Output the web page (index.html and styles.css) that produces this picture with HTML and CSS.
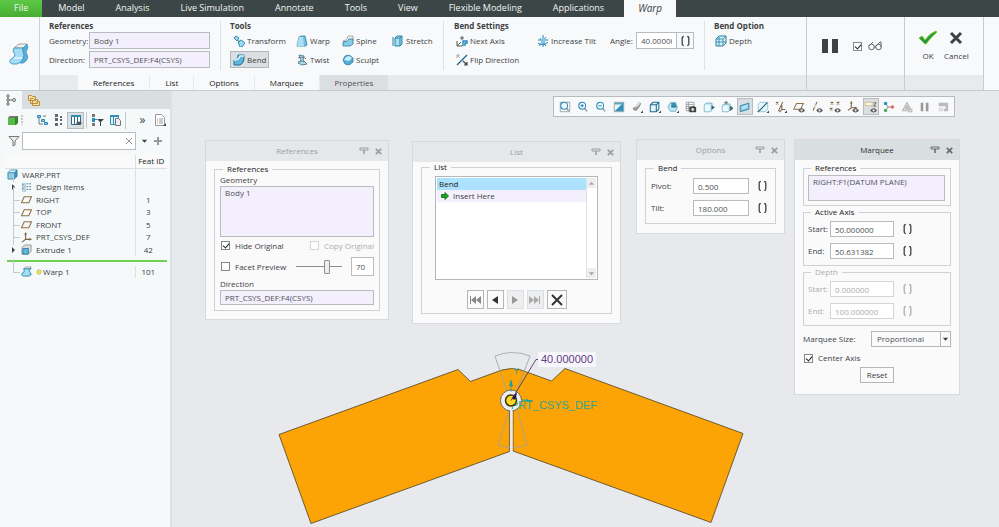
FILE: index.html
```html
<!DOCTYPE html>
<html lang="en">
<head>
  <meta charset="UTF-8" />
  <title>WARP.PRT</title>
  <link rel="stylesheet" href="styles.css">
</head>
<body>
  <svg class="sprite" aria-hidden="true">
    <symbol id="pin" viewBox="0 0 10 8"><path d="M1 1h8v2H1z" fill="none" stroke="currentColor"/><path d="M5 3v4" stroke="currentColor" stroke-width="1.6"/></symbol>
    <symbol id="close" viewBox="0 0 10 10"><path d="M2 2l6 6M8 2l-6 6" stroke="currentColor" stroke-width="2"/></symbol>
    <symbol id="cube" viewBox="0 0 12 12"><path d="M1 4l3-3h7l-3 3z" fill="#d5f1fb"/><path d="M1 4h7v7H1z" fill="#8ccbe8"/><path d="M8 4l3-3v7l-3 3z" fill="#3d93b8"/><path d="M1 4l3-3h7v7l-3 3H1zM1 4h7v7M8 4l3-3" fill="none" stroke="#2580a5" stroke-width=".8"/></symbol>
    <symbol id="scroll" viewBox="0 0 20 22"><path d="M5 5l5-4h8l-4 4z" fill="#f2f2f0" stroke="#888" stroke-width=".8"/><path d="M5 5h9q-1 3 1 5 1 3-1 6-2 4-6 5H3q-4-2-1-5l3-2q2-2 0-4-2-3 0-5z" fill="#a4ddf5" stroke="#2e8db8" stroke-width=".8"/><path d="M14 5l4-4q2 3 0 6-2 2 0 4 2 4-1 7-2 3-6 2 4-3 4-8-2-4-1-7z" fill="#58aed5" stroke="#2e8db8" stroke-width=".6"/><path d="M5 15h8" stroke="#e5f8ff" stroke-width="1.5"/></symbol>
    <symbol id="plane" viewBox="0 0 12 10"><path d="M3.500 2h8l-3 6.500h-8z" fill="none" stroke="#917044" stroke-width="1.200"/></symbol>
    <symbol id="eye" viewBox="0 0 8 6"><path d="M0 3q4-5 8 0-4 5-8 0z" fill="#555"/><circle cx="4" cy="3" r="1.300" fill="#eee"/></symbol>
    <symbol id="lens" viewBox="0 0 14 14"><path d="M8 8l4 4" stroke="#a9adb0" stroke-width="2"/><circle cx="6" cy="5.500" r="4" fill="#f5fcff" stroke="#2b90bf" stroke-width="1.200"/></symbol>
    <symbol id="csys" viewBox="0 0 12 12"><path d="M5 1v7h6M5 8l-4 3" fill="none" stroke="#7e6440" stroke-width="1.200"/><path d="M3.500 3L5 0l1.500 3zM9 6.500L12 8 9 9.500z" fill="#7e6440"/></symbol>
    <symbol id="brackets" viewBox="0 0 11 12"><path d="M3.800 1.500q-1.600 0-1.600 1.500v6q0 1.500 1.600 1.500M7.200 1.500q1.600 0 1.600 1.500v6q0 1.500-1.600 1.500" fill="none" stroke="currentColor" stroke-width="1.300"/></symbol>
    <symbol id="drop" viewBox="0 0 8 8"><path d="M1 2.500h6L4 6z" fill="currentColor"/></symbol>
  </svg>

  <header class="ribbon">
    <nav class="menu">
      <a href="#" class="file">File</a>
      <a href="#">Model</a>
      <a href="#">Analysis</a>
      <a href="#">Live Simulation</a>
      <a href="#">Annotate</a>
      <a href="#">Tools</a>
      <a href="#">View</a>
      <a href="#">Flexible Modeling</a>
      <a href="#">Applications</a>
      <a href="#" class="current">Warp</a>
    </nav>

    <div class="ribbon-body">
      <div class="feature-icon"><svg width="20" height="22"><use href="#scroll"/></svg></div>

      <div class="ribbon-main">
        <div class="groups">
          <section class="group refs">
            <h2>References</h2>
            <div class="line"><label for="geometry">Geometry:</label><input id="geometry" class="pick" value="Body 1"></div>
            <div class="line"><label for="direction">Direction:</label><input id="direction" class="pick" value="PRT_CSYS_DEF:F4(CSYS)"></div>
          </section>

          <section class="group tools">
            <h2>Tools</h2>
            <div class="tool-grid">
              <button class="tool"><svg viewBox="0 0 12 12"><path d="M1 3l2-2 3 2-2 3zM5 7l3-2 4 3-3 4H7z" fill="#9fd9ef" stroke="#2f8cb5"/><path d="M4 5l3 2" stroke="#777"/></svg>Transform</button>
              <button class="tool"><svg viewBox="0 0 12 12"><path d="M1 11L3 2l2-1h4l2 9-2 1z" fill="#76bedd" stroke="#2580a5" stroke-width=".8"/><path d="M3 2h4l1 9H1z" fill="#abdff1"/></svg>Warp</button>
              <button class="tool"><svg viewBox="0 0 12 12"><path d="M1 6q4 0 5-5h5v5L7 8z" fill="#eee" stroke="#999" stroke-width=".8"/><path d="M1 7q5 0 6-3h4v5l-3 2H1z" fill="#88cbe7" stroke="#2580a5" stroke-width=".8"/></svg>Spine</button>
              <button class="tool"><svg viewBox="0 0 12 12"><path d="M3 3l2-2h5v8l-2 2H3z" fill="#a9ddf0" stroke="#2580a5"/><path d="M3 3h5v8M8 3l2-2M1 2v9" fill="none" stroke="#2580a5"/></svg>Stretch</button>
              <button class="tool on"><svg viewBox="0 0 12 12"><path d="M1 6q4 0 4-5h6v4q0 4-4 6H1z" fill="#62b4d8" stroke="#1e7197"/><path d="M1 6q5 0 6-4h4" fill="none" stroke="#d8f4ff" stroke-width="1.500"/></svg>Bend</button>
              <button class="tool"><svg viewBox="0 0 12 12"><path d="M3 1l5 1-1 4 4 4-5 1-4-2 3-3z" fill="#aadcef" stroke="#54869b"/><path d="M2 4q6-2 8 1M2 8q6-2 8 1" fill="none" stroke="#777"/></svg>Twist</button>
              <button class="tool"><svg viewBox="0 0 12 12"><path d="M1 6l2-4 4-1 4 3v4l-4 3-4-1z" fill="#56acd3" stroke="#2580a5" stroke-width=".8"/><path d="M2 6l2-3 3-1 3 2-3 3z" fill="#c9eefa"/></svg>Sculpt</button>
            </div>
          </section>

          <section class="group settings">
            <h2>Bend Settings</h2>
            <div class="setting-grid">
              <button class="tool"><svg viewBox="0 0 12 12"><path d="M1 6v5h5M1 11l4-4M6 1v4M4 3h4" fill="none" stroke="#555"/><path d="M7 11V6h4v2H9v3" fill="none" stroke="#258abb" stroke-width="1.500"/></svg>Next Axis</button>
              <button class="tool"><svg viewBox="0 0 12 12"><path d="M6 0v12M1 5h10M2 11l7-9M3 3l6 8M1 8q5 4 10-1" fill="none" stroke="#2788ba"/><path d="M4 4h4v4H4z" fill="#82c5e5"/></svg>Increase Tilt</button>
              <div class="angle"><label for="angle">Angle:</label><input id="angle" value="40.000000"><button aria-label="Expression"><svg width="11" height="12"><use href="#brackets"/></svg></button></div>
              <button class="tool"><svg viewBox="0 0 12 12"><path d="M1 11L11 1" stroke="#246e98" stroke-width="1.500"/><path d="M1 4V1h3M1 1l3 3" fill="none" stroke="#aaa"/><path d="M7 7l4 4M11 8v3H8" fill="none" stroke="#444" stroke-width="1.200"/></svg>Flip Direction</button>
            </div>
          </section>

          <section class="group option">
            <h2>Bend Option</h2>
            <button class="tool"><svg viewBox="0 0 12 12"><path d="M1 4l3-3h7v7l-3 3H1z" fill="#d8f0f8" stroke="#2580a5"/><path d="M1 4h7v7M8 4l3-3M4 2v9M1 7h10" fill="none" stroke="#2580a5" stroke-width=".8"/></svg>Depth</button>
          </section>
        </div>

        <nav class="subtabs">
          <a href="#">References</a>
          <a href="#">List</a>
          <a href="#">Options</a>
          <a href="#">Marquee</a>
          <a href="#" class="off">Properties</a>
        </nav>
      </div>

      <div class="side preview">
        <div class="side-body">
          <button aria-label="Pause"><svg width="16" height="16"><path d="M0 1h6v14H0zM10 1h6v14h-6z" fill="#3d4244"/></svg></button>
          <input type="checkbox" id="preview" aria-label="Preview" checked>
          <label for="preview"><svg width="14" height="10" fill="none" stroke="#626669"><circle cx="3.500" cy="6" r="2.800"/><circle cx="10.500" cy="6" r="2.800"/><path d="M1 5l4-4M8 5l4-4h1v5M6 6h2"/></svg></label>
        </div>
      </div>
      <div class="side confirm">
        <div class="side-body">
          <button><svg width="20" height="16"><path d="M1 8l3-2 3 4q5-7 11-9l1 1Q13 7 8 14H7z" fill="#1c9b46" stroke="#8fc31f"/></svg>OK</button>
          <button><svg width="16" height="16"><path d="M3 3l10 10M13 3L3 13" stroke="#3d4244" stroke-width="3"/></svg>Cancel</button>
        </div>
      </div>
      <div class="rest"></div>
    </div>
  </header>

  <main class="work">
    <aside class="sidebar">
      <div class="side-tabs">
        <button class="current" aria-label="Model tree"><svg width="12" height="12" fill="none" stroke="#666"><path d="M3 1v10M3 6h4"/><circle cx="3" cy="2" r="1.200" fill="#fff"/><circle cx="3" cy="6" r="1.200" fill="#fff"/><circle cx="3" cy="10" r="1.200" fill="#fff"/><circle cx="9" cy="6" r="1.500"/></svg></button>
        <button aria-label="Folders"><svg width="13" height="12" fill="#f5e1b0" stroke="#bd8d39"><path d="M1.500 1.500h3l1 1h3v4h-7zM3.500 4.500h3l1 1h3v4h-7zM5.500 6.500h3l1 1h3v4h-7z"/></svg></button>
      </div>

      <div class="tree-tools">
        <svg width="12" height="12"><path d="M1 4l2-2h8v7l-2 2H1z" fill="#338928"/><path d="M1 4h7v7H1z" fill="#55bd45"/><path d="M1 4l2-2h8L8 4z" fill="#777"/></svg>
        <svg width="3" height="12"><path d="M1 1v10" stroke="#999" stroke-dasharray="2 1"/></svg>
        <button aria-label="Expand"><svg width="12" height="12" stroke="#2989b1" fill="#8fcdea"><path d="M1.500 1.500h3v2h-3zM5.500 5.500h3v2h-3zM8.500 8.500h3v2h-3z"/><path d="M3 4v6h4M7 2h3" fill="none" stroke="#777"/></svg></button>
        <button aria-label="Collapse"><svg width="8" height="12" fill="#666"><path d="M0 0h3v3H0zM0 4h3v3H0zM0 9h3v3H0zM5 2h2v2H5zM5 5h2v2H5zM5 9h2v2H5z"/></svg></button>
        <button class="on" aria-label="Columns"><svg width="12" height="12"><path d="M1.500 1.500h9v9h-9zM4.500 1v9M7.500 1v9" fill="#fff" stroke="#256c88"/><path d="M1 1h10v2H1z" fill="#338eb3"/><path d="M6 9q3-3 6 0-3 4-6 0" fill="#555"/></svg></button>
        <i class="bar"></i>
        <button aria-label="Tree filters"><svg width="12" height="12"><path d="M0 0h3v3H0zM0 9h3v3H0z" fill="#777"/><path d="M0 4h3v4H0zM3 5h2v1H3z" fill="#278cb8"/><path d="M5 5h7L9 8v4H8V8z" fill="#444"/></svg></button>
        <button aria-label="Tree columns"><svg width="12" height="12"><path d="M1.500 1.500h8v9h-8zM4.500 1v9" fill="#d8f0fa" stroke="#398faf"/><path d="M1 1h9v2H1z" fill="#338eb3"/><path d="M6.500 4.500h3l2 2v5h-5z" fill="#eee" stroke="#777"/></svg></button>
        <i class="bar"></i>
        <button class="more">»</button>
        <button aria-label="Show"><svg width="12" height="12"><path d="M1.500.500h6l3 3v8h-9z" fill="#fff" stroke="#999"/><path d="M3 5h1M5 5h4M3 7h1M5 7h4M3 9h1M5 9h4" stroke="#999"/><path d="M12 9v3H9z" fill="#444"/></svg></button>
      </div>

      <div class="filter">
        <svg width="12" height="12"><path d="M1 1.500h10L7 6v4l-2 1V6z" fill="#eee" stroke="#777"/></svg>
        <div class="search"><input aria-label="Filter tree"><button aria-label="Clear"><svg width="8" height="8"><path d="M1 1l6 6M7 1L1 7" stroke="#999"/></svg></button></div>
        <button aria-label="Filter list"><svg width="7" height="8"><use href="#drop"/></svg></button>
        <button aria-label="Add"><svg width="8" height="8"><path d="M4 0v8M0 4h8" stroke="#999" stroke-width="2"/></svg></button>
      </div>

      <table class="tree">
        <thead><tr><th></th><th>Feat ID</th></tr></thead>
        <tbody>
          <tr><td><span class="node root"><svg viewBox="0 0 12 12"><use href="#cube"/></svg>WARP.PRT</span></td><td></td></tr>
          <tr><td><span class="node exp"><svg viewBox="0 0 12 12"><path d="M1 1h3v10H1z" fill="#b8ddea"/><path d="M2 2v2M2 6v2M6 2h2M6 5h2M6 8h2M9 2h2M9 5h2M9 8h2" stroke="#397d9b"/><path d="M4.500 1v10" stroke="#aaa"/></svg>Design Items</span></td><td></td></tr>
          <tr><td><span class="node"><svg viewBox="0 0 12 10"><use href="#plane"/></svg>RIGHT</span></td><td>1</td></tr>
          <tr><td><span class="node"><svg viewBox="0 0 12 10"><use href="#plane"/></svg>TOP</span></td><td>3</td></tr>
          <tr><td><span class="node"><svg viewBox="0 0 12 10"><use href="#plane"/></svg>FRONT</span></td><td>5</td></tr>
          <tr><td><span class="node"><svg viewBox="0 0 12 12"><use href="#csys"/></svg>PRT_CSYS_DEF</span></td><td>7</td></tr>
          <tr><td><span class="node exp"><svg viewBox="0 0 12 12"><path d="M1 4l3-3h7v7l-3 3H1z" fill="#ddd" stroke="#999"/><path d="M2 5h6v6H2z" fill="#66b7da" stroke="#2580a5"/></svg>Extrude 1</span></td><td>42</td></tr>
          <tr class="insert"><td colspan="2"><div></div></td></tr>
          <tr><td><span class="node"><svg viewBox="0 0 12 12"><path d="M3 3l2-2h6L9.500 3z" fill="#f2f2f0" stroke="#888" stroke-width=".7"/><path d="M3 3h6q-1 2 1 4l1 2-2 2H2Q0 10 1 8l2-1q1-2 0-4z" fill="#a4ddf5" stroke="#2580a5" stroke-width=".9"/><path d="M9 3l2-2q1 2-1 4zM10 7l1.500 2L9 11z" fill="#3d93b8"/></svg><svg class="star" viewBox="0 0 6 6"><path d="M3 0v6M0 3h6M1 1l4 4M5 1L1 5" stroke="#8c8b27" stroke-width=".6"/><circle cx="3" cy="3" r="1.600" fill="#f2e318"/></svg>Warp 1</span></td><td>101</td></tr>
        </tbody>
      </table>
    </aside>

    <section class="canvas">
      <svg class="model" width="827" height="436" viewBox="172 91 827 436">
        <path d="M279 434.500L458 369.500L470.500 381.500L502 370Q512 367 521 370L551.500 381L565 368.500L743 433.500L711 522.500L513 451V410H509.500V451.500L311 523.500Z" fill="#fca306" stroke="#4d4220" stroke-width=".8"/>
        <path d="M495 356Q512 349 530 356L514 398L527 445Q512 450 498 445L511 404Z" fill="none" stroke="#a0a0a4" stroke-width=".8"/>
        <circle cx="511" cy="400.500" r="10.500" fill="#efeff1" stroke="#555" stroke-width=".8"/>
        <path d="M509.900 409h2.700v43h-2.700z" fill="#e9eaee"/>
        <path d="M511 392v-9M509.500 386l1.500-6 1.500 6z" fill="#139ca5" stroke="#139ca5" stroke-width=".6"/>
        <path d="M522 400l11 1" stroke="#139ca5"/><path d="M526 399l7 2-7 1z" fill="#139ca5"/>
        <text x="513" y="374" class="axis">Y</text>
        <text x="511" y="409" class="csys">PRT_CSYS_DEF</text>
        <circle cx="511" cy="400.500" r="5.500" fill="#ffd91e" stroke="#3d3719" stroke-width="1.500"/>
        <path d="M511 400.500L536 359.500H539" fill="none" stroke="#4c3a69" stroke-width=".9"/>
        <path d="M512 398l5-6-1 6-2 2z" fill="#211950"/>
        <path d="M538 352h58v15h-58z" fill="#f7f6fb"/>
        <text x="541" y="363" class="dim">40.000000</text>
      </svg>

      <div class="view-tools">
        <button aria-label="Refit"><svg viewBox="0 0 14 14"><path d="M1.500 1.500h11v11h-11z" fill="#fff" stroke="#999"/><use href="#lens"/></svg></button>
        <button aria-label="Zoom in"><svg viewBox="0 0 14 14"><use href="#lens"/><path d="M6 3.500v4M4 5.500h4" stroke="#246e98"/></svg></button>
        <button aria-label="Zoom out"><svg viewBox="0 0 14 14"><use href="#lens"/><path d="M4 5.500h4" stroke="#246e98"/></svg></button>
        <button aria-label="Repaint"><svg viewBox="0 0 14 14"><path d="M1.500 1.500h11v11h-11z" fill="#e7f4f8" stroke="#999"/><path d="M2 12L12 2v10z" fill="#2d91b9"/><path d="M2 2h10v2H2z" fill="#55a5c1"/></svg></button>
        <button aria-label="Rendering"><svg viewBox="0 0 14 14"><path d="M9 1l3 2-2 4-4 5-4-2 1-3 4-1z" fill="#999"/><path d="M9 1l2 2-4 4-4 1" fill="#ddd"/><path d="M14 11v3h-3z" fill="#444"/></svg></button>
        <button aria-label="Display style"><svg viewBox="0 0 14 14"><path d="M1.500 4.500l3-3h7v8l-3 3h-7zM1.500 4.500h7v8M8.500 4.500l3-3" fill="#e4f4fa" stroke="#1f6d8e" stroke-width="1.200"/><path d="M14 11v3h-3z" fill="#444"/></svg></button>
        <button aria-label="Saved views"><svg viewBox="0 0 14 14"><path d="M1 7l3-5h6l2 5-2 5H4z" fill="#bee8f5" stroke="#6cacc6"/><path d="M5 2h5l1 5H5z" fill="#358eb3"/><path d="M5 7h6" stroke="#205c75"/><path d="M14 11v3h-3z" fill="#444"/></svg></button>
        <button aria-label="View manager"><svg viewBox="0 0 14 14"><path d="M1.500 1.500h9v10h-9zM1 4h9M1 6.500h9M1 9h9M4 1v11" fill="#fff" stroke="#999"/><path d="M5 7h2l1-1h3l1 1h1v6H5z" fill="#444"/><circle cx="9" cy="10" r="1.700" fill="#ddd"/></svg></button>
        <button aria-label="Perspective"><svg viewBox="0 0 14 14"><path d="M1.500 4.500l2-2h7v8l-2 2h-7z" fill="#c4ebf7" stroke="#69a8be"/><path d="M2 5h6v7H2z" fill="#edfbff"/><path d="M10 5l4 2.500-4 2.500z" fill="#405c68"/></svg></button>
        <button aria-label="Explode"><svg viewBox="0 0 14 14"><path d="M1.500 5.500l2-2h7v7l-2 2h-7z" fill="#c4ebf7" stroke="#69a8be"/><path d="M2 6h6v6H2z" fill="#edfbff"/><path d="M6 0v4M4 2h4M11 6l3 2.500-3 2.500z" fill="#405c68" stroke="#405c68"/></svg></button>
        <button class="on" aria-label="Section"><svg viewBox="0 0 14 14"><path d="M1.500 5.500l10-3v7l-10 3z" fill="#83c7e2" stroke="#2580a5"/><path d="M3 7l7-3v4l-7 2z" fill="#b8e2f2"/></svg></button>
        <button aria-label="Clipping"><svg viewBox="0 0 14 14"><path d="M1.500 3.500l2-2h9v8l-3 3h-8z" fill="#e6f8fc" stroke="#88c5db"/><path d="M1 13L12 2" stroke="#33515f" stroke-width="1.300"/><path d="M14 11v3h-3z" fill="#444"/></svg></button>
        <button aria-label="Datum display"><svg viewBox="0 0 14 14"><path d="M1 1l3 3M4 1L1 4M9 1L4 12M8 5v5h4M8 10l-3 3" fill="none" stroke="#826643" stroke-width="1.200"/><path d="M14 11v3h-3z" fill="#444"/></svg></button>
        <button aria-label="Planes"><svg viewBox="0 0 14 14"><use href="#plane" x="0" y="1" width="13" height="10"/><use href="#eye" x="6" y="8" width="8" height="6"/></svg></button>
        <button aria-label="Axes"><svg viewBox="0 0 14 14"><path d="M7 1L2 12" stroke="#826643" stroke-width="1.200" stroke-dasharray="4 1 1 1"/><use href="#eye" x="6" y="8" width="8" height="6"/></svg></button>
        <button aria-label="Points"><svg viewBox="0 0 14 14"><path d="M2 1l3 3M5 1L2 4M9 1l3 3M12 1L9 4M1 8l3 3M4 8l-3 3" stroke="#826643" stroke-width="1.400"/><use href="#eye" x="6" y="8" width="8" height="6"/></svg></button>
        <button aria-label="Coordinate systems"><svg viewBox="0 0 14 14"><use href="#csys" width="12" height="12"/><use href="#eye" x="6" y="8" width="8" height="6"/></svg></button>
        <button class="on" aria-label="Annotations"><svg viewBox="0 0 14 14"><path d="M.500 1.500h8v4h-8z" fill="#fff8e0" stroke="#c8b990"/><path d="M10 2h3L10 6h3" fill="none" stroke="#555"/><use href="#eye" x="6" y="8" width="8" height="6"/></svg></button>
        <button aria-label="Spin center"><svg viewBox="0 0 14 14"><path d="M3 3l3 4-3 4M6 7h5" fill="none" stroke="#777"/><circle cx="3" cy="3" r="2" fill="#318fb8"/><circle cx="3" cy="11" r="2" fill="#4dac62"/><circle cx="11" cy="7" r="2" fill="#e26b61"/></svg></button>
        <button aria-label="Simulate"><svg viewBox="0 0 14 14" fill="#ddd" stroke="#aaa"><path d="M7 1.500l5.500 10h-11z"/><path d="M7 5l2 4H5z"/><circle cx="11" cy="11" r="2"/></svg></button>
        <button aria-label="Pause"><svg viewBox="0 0 14 14"><path d="M2 2h3v10H2zM8 2h3v10H8z" fill="#999"/></svg></button>
        <button aria-label="Results"><svg viewBox="0 0 14 14"><path d="M2 2h11v10H8V9h2V6H2z" fill="#bbb"/><path d="M2 8h5v4H2z" fill="#ddd"/></svg></button>
      </div>

      <div class="dialog dlg-references">
        <div class="title"><h3>References</h3><button aria-label="Pin"><svg width="10" height="8"><use href="#pin"/></svg></button><button aria-label="Close"><svg width="9" height="9"><use href="#close"/></svg></button></div>
        <fieldset>
          <legend>References</legend>
          <label for="ref-geometry">Geometry</label>
          <textarea id="ref-geometry" class="pick tall">Body 1</textarea>
          <div class="check-row">
            <label class="check"><input type="checkbox" checked>Hide Original</label>
            <label class="check disabled"><input type="checkbox" disabled>Copy Original</label>
          </div>
          <div class="check-row facet">
            <label class="check"><input type="checkbox">Facet Preview</label>
            <input type="range" aria-label="Facet quality" min="0" max="100" value="70">
            <input class="value" aria-label="Facet value" value="70">
          </div>
          <label for="ref-direction">Direction</label>
          <input id="ref-direction" class="pick" value="PRT_CSYS_DEF:F4(CSYS)">
        </fieldset>
      </div>

      <div class="dialog dlg-list">
        <div class="title"><h3>List</h3><button aria-label="Pin"><svg width="10" height="8"><use href="#pin"/></svg></button><button aria-label="Close"><svg width="9" height="9"><use href="#close"/></svg></button></div>
        <fieldset>
          <legend>List</legend>
          <div class="listbox">
            <ul>
              <li class="selected">Bend</li>
              <li><svg width="8" height="8"><path d="M.500 2.500H4V.500L7.500 4 4 7.500V5.500H.500z" fill="#17a817" stroke="#0b5a14" stroke-width=".8"/></svg>Insert Here</li>
            </ul>
            <div class="scroll">
              <button aria-label="Scroll up"><svg class="flip" width="7" height="7"><use href="#drop"/></svg></button>
              <button aria-label="Scroll down"><svg width="7" height="7"><use href="#drop"/></svg></button>
            </div>
          </div>
          <div class="steps">
            <button aria-label="First"><svg width="12" height="8" fill="#888"><path d="M1 0h1v8H1zM7 0v8L2 4zM12 0v8L7 4z"/></svg></button>
            <button aria-label="Previous"><svg width="8" height="8" fill="#333"><path d="M7 0v8L1 4z"/></svg></button>
            <button aria-label="Next" disabled><svg width="8" height="8" fill="#999"><path d="M1 0v8l6-4z"/></svg></button>
            <button aria-label="Last" disabled><svg width="12" height="8" fill="#aaa"><path d="M10 0h1v8h-1zM0 0v8l5-4zM5 0v8l5-4z"/></svg></button>
            <button class="delete" aria-label="Delete"><svg width="14" height="14"><path d="M2 2l10 10M12 2L2 12" stroke="#333" stroke-width="2"/></svg></button>
          </div>
        </fieldset>
      </div>

      <div class="dialog dlg-options">
        <div class="title"><h3>Options</h3><button aria-label="Pin"><svg width="10" height="8"><use href="#pin"/></svg></button><button aria-label="Close"><svg width="9" height="9"><use href="#close"/></svg></button></div>
        <fieldset>
          <legend>Bend</legend>
          <div class="field"><label for="pivot">Pivot:</label><input id="pivot" value="0.500"><button aria-label="Expression"><svg width="11" height="12"><use href="#brackets"/></svg></button></div>
          <div class="field"><label for="tilt">Tilt:</label><input id="tilt" value="180.000"><button aria-label="Expression"><svg width="11" height="12"><use href="#brackets"/></svg></button></div>
        </fieldset>
      </div>

      <div class="dialog dlg-marquee active">
        <div class="title"><h3>Marquee</h3><button aria-label="Pin"><svg width="10" height="8"><use href="#pin"/></svg></button><button aria-label="Close"><svg width="9" height="9"><use href="#close"/></svg></button></div>
        <fieldset>
          <legend>References</legend>
          <textarea class="pick" aria-label="Marquee reference">RIGHT:F1(DATUM PLANE)</textarea>
        </fieldset>
        <fieldset>
          <legend>Active Axis</legend>
          <div class="field"><label for="axis-start">Start:</label><input id="axis-start" value="50.000000"><button aria-label="Expression"><svg width="11" height="12"><use href="#brackets"/></svg></button></div>
          <div class="field"><label for="axis-end">End:</label><input id="axis-end" value="50.631382"><button aria-label="Expression"><svg width="11" height="12"><use href="#brackets"/></svg></button></div>
        </fieldset>
        <fieldset disabled>
          <legend>Depth</legend>
          <div class="field"><label for="depth-start">Start:</label><input id="depth-start" value="0.000000"><button aria-label="Expression"><svg width="11" height="12"><use href="#brackets"/></svg></button></div>
          <div class="field"><label for="depth-end">End:</label><input id="depth-end" value="100.000000"><button aria-label="Expression"><svg width="11" height="12"><use href="#brackets"/></svg></button></div>
        </fieldset>
        <div class="size-row">
          <label for="size">Marquee Size:</label>
          <div class="select"><select id="size"><option>Proportional</option></select><svg width="8" height="8"><use href="#drop"/></svg></div>
        </div>
        <label class="check"><input type="checkbox" checked>Center Axis</label>
        <button class="reset">Reset</button>
      </div>
    </section>
  </main>
</body>
</html>
```

FILE: styles.css
```css
* { box-sizing: border-box; }
body {
  margin: 0; min-height: 100vh; overflow: hidden;
  display: flex; flex-direction: column;
  font: 8px/12px "Open Sans", "Noto Sans", sans-serif;
  color: #3c4143; background: #e7e9ed;
}
.sprite { position: absolute; width: 0; height: 0; }
svg { flex: none; display: block; }
h2, h3, ul { margin: 0; padding: 0; }
button {
  font: inherit; color: inherit; padding: 0; border: 0; background: none;
  display: flex; align-items: center; justify-content: center;
}
input, textarea, select { font: inherit; color: #4d5255; }
input:not([type]), textarea {
  min-width: 0; padding: 0 4px; border: 1px solid #b9bcbe; border-radius: 0; background: #fff;
}
input.pick, textarea.pick { background: #f4effd; }
input[type="checkbox"] {
  appearance: none; width: 9px; height: 9px; margin: 0; flex: none;
  border: 1px solid #83888b; background: #fff; position: relative;
}
input[type="checkbox"]:checked::after {
  content: ""; position: absolute; left: 2px; top: 0;
  width: 3px; height: 5px; transform: rotate(40deg);
  border: solid #222; border-width: 0 1px 1px 0;
}
a { color: inherit; text-decoration: none; }

/* ribbon */
.menu { display: flex; gap: 1px; height: 17px; background: #3c4646; color: #f2f4f4; font-size: 9px; line-height: 16px; }
.menu a { padding: 0 15px; white-space: nowrap; }
.menu .file { background: linear-gradient(#5cc845, #46ad31); padding: 0 14px; }
.menu .current { background: #f8f9fb; color: #3c4143; font-size: 10px; font-style: italic; padding: 0 14px; margin-left: 4px; }
.ribbon { border-bottom: 1px solid #c3cacc; }
.ribbon-body { display: flex; height: 73px; background: #f8f9fb; }
.feature-icon { width: 40px; padding: 26px 0 0 9px; border-right: 1px solid #cdd0d3; }
.ribbon-main { flex: 1; display: flex; flex-direction: column; }
.groups { display: flex; flex: 1; }
.group { position: relative; padding: 2px 0 0 9px; white-space: nowrap; }
.group + .group::before {
  content: ""; position: absolute; left: 0; top: 4px; bottom: 5px; border-left: 1px solid #dfe2e5;
}
.group h2 { font-size: 8px; line-height: 13px; }
.refs { width: 180px; }
.tools { width: 223px; padding-left: 10px; }
.settings { width: 261px; padding-left: 11px; }
.option { flex: 1; padding-left: 10px; }
.line { display: flex; align-items: center; margin-bottom: 2px; }
.line label { width: 40px; }
.line input { width: 121px; height: 17px; }
.tool { height: 17px; gap: 2px; padding: 0 2px; border: 1px solid transparent; justify-content: flex-start; justify-self: start; }
.tool svg { width: 12px; height: 12px; }
.tool.on { background: #dcdfe1; border-color: #b3b7ba; }
.option .tool { padding: 0; }
.tool-grid { display: grid; grid-template-columns: 63px 46px 50px auto; gap: 2px 0; }
.setting-grid { display: grid; grid-template-columns: 81px 76px auto; gap: 2px 0; margin-left: -1px; }
.angle { display: flex; align-items: center; height: 17px; }
.angle label { width: 26px; }
.angle input { width: 41px; height: 17px; }
.angle button { width: 17px; height: 17px; border: 1px solid #b9bcbe; border-left: 0; }

.subtabs { display: flex; height: 15px; padding-left: 38px; background: #e8eaec; line-height: 16px; color: #222; }
.subtabs a { padding: 0 15px; background: #f8f9fb; border-right: 1px solid #e8eaec; }
.subtabs .off { background: #dcdfe1; color: #4d5255; }
.side { border-left: 1px solid #c8ccd0; padding-bottom: 15px; background: linear-gradient(#f8f9fb 58px, #e8eaec 58px); }
.side-body { display: flex; height: 58px; align-items: center; }
.preview { width: 98px; }
.preview .side-body { gap: 6px; padding-left: 15px; }
.preview input { margin-left: 9px; }
.confirm { width: 79px; }
.confirm .side-body { gap: 6px; padding-left: 13px; }
.confirm button { flex-direction: column; gap: 4px; }
.rest { width: 16px; border-left: 1px solid #c8ccd0; }

/* model tree */
.work { flex: 1; display: flex; }
.sidebar { width: 172px; background: #f6f9fa; border-right: 2px solid #dde1e3; }
.side-tabs { display: flex; height: 18px; background: #d9dfe0; }
.side-tabs button { width: 22px; }
.side-tabs .current { background: #f6f9fa; }
.tree-tools { display: flex; align-items: center; height: 22px; padding-left: 7px; margin-bottom: 1px; }
.tree-tools svg + svg { margin: 0 9px 0 2px; }
.tree-tools button { width: 17px; height: 17px; }
.tree-tools .on, .view-tools .on { background: #dcdfe1; border: 1px solid #b9bcbe; }
.bar { height: 17px; border-left: 1px solid #c5c9cc; margin: 0 2px; }
.tree-tools .more { font-size: 12px; margin-left: 6px; }
.filter { display: flex; align-items: center; height: 18px; padding-left: 8px; gap: 2px; }
.search { display: flex; width: 114px; height: 18px; border: 1px solid #b9bcbe; background: #fff; }
.search input { flex: 1; border: 0; }
.search button { width: 13px; }
.filter > button { width: 12px; }

.tree { width: 162px; margin: 5px 0 0 5px; border-collapse: collapse; table-layout: fixed; }
.tree th { height: 13px; padding: 0; line-height: 12px; font-weight: normal; color: #222; background: #fafafa; border-bottom: 1px solid #dde0e2; }
.tree th:first-child { width: 130px; }
.tree td { height: 12px; padding: 0; line-height: 12px; }
.tree tbody tr:nth-child(even) td { height: 13px; }
.tree tbody tr.insert td { height: 10px; }
.tree th + th, .tree td + td { border-left: 1px solid #dde0e2; }
.tree td + td { text-align: center; padding-right: 6px; }
.node { position: relative; display: flex; align-items: center; height: 12px; gap: 4px; padding-left: 16px; }
.node svg { width: 11px; height: 11px; }
.node .star { width: 6px; height: 6px; margin-right: -3px; }
.node.root { padding-left: 2px; }
.node:not(.root)::before {
  content: ""; position: absolute; left: 8px; top: -7px; width: 6px; height: 13px;
  border: solid #c5c9cb; border-width: 0 0 1px 1px;
}
.node.exp::before { width: 0; height: 8px; border-bottom: 0; }
.node.exp::after {
  content: ""; position: absolute; left: 7px; top: 3px;
  border: 3px solid transparent; border-left: 3px solid #444; border-right: 0;
}
.tree .insert div { position: relative; height: 2px; margin-left: 2px; background: #6fd054; }

/* graphics area */
.canvas { flex: 1; position: relative; display: flex; flex-direction: column; overflow: hidden; }
.model { position: absolute; left: 0; top: 0; }
.axis, .csys { font: 11px "Liberation Sans", sans-serif; fill: #37a58b; }
.axis { font-size: 9px; }
.dim { font: 11px "Liberation Sans", sans-serif; fill: #624087; }
.view-tools {
  position: relative; align-self: flex-end; display: flex; gap: 2px;
  margin: 5px 44px 0 0; padding: 1px 3px; border: 1px solid #b9bcbe; background: #f8f9fb;
}
.view-tools button { width: 16px; height: 17px; }
.view-tools svg { width: 12px; height: 12px; }

.dialog { position: absolute; padding: 0 8px; background: #fafafb; border: 1px solid #d7dadc; }
.title {
  display: flex; align-items: center; height: 20px; margin: 0 -8px 3px; padding: 0 3px;
  background: #e5e7e9; color: #9a9fa2;
}
.title h3 { flex: 1; padding-left: 28px; font-size: 8px; font-weight: normal; text-align: center; }
.title button { width: 14px; }
.active .title { background: #d9dedf; color: #2f3436; }
.active .title button { color: #6a6f72; }
fieldset { margin: 0 0 1px; padding: 0 5px 5px; border: 1px solid #cfd2d4; min-width: 0; }
legend { margin-left: 3px; padding: 0 4px; line-height: 10px; color: #222; }
fieldset label { display: block; line-height: 12px; }
fieldset textarea { display: block; width: 100%; resize: none; line-height: 12px; }
fieldset input.pick { display: block; width: 100%; height: 15px; }
label.check { display: flex; align-items: center; gap: 5px; white-space: nowrap; }
.disabled, fieldset:disabled, fieldset:disabled legend, fieldset:disabled input, fieldset:disabled button { color: #a9adaf; }
.disabled input, fieldset:disabled input { border-color: #d3d5d7; }

.dlg-references { left: 33px; top: 49px; width: 184px; padding-bottom: 7px; }
.dlg-references .tall { height: 51px; }
.check-row { display: flex; justify-content: space-between; align-items: center; height: 17px; padding-left: 1px; }
.facet { height: 19px; margin: 3px 0 2px; }
.facet input[type="range"] { appearance: none; width: 46px; height: 14px; margin: 0; background: linear-gradient(#8b8f92, #8b8f92) center / 100% 1px no-repeat; }
.facet input[type="range"]::-webkit-slider-thumb { appearance: none; width: 6px; height: 14px; border: 1px solid #8b8f92; background: #eceeef; border-radius: 1px; }
.facet .value { width: 23px; height: 19px; }

.dlg-list { left: 240px; top: 50px; width: 209px; padding-bottom: 8px; }
.dlg-list .title { margin-bottom: 0; }
.dlg-list fieldset { padding-bottom: 4px; }
.listbox { display: flex; height: 104px; margin: 4px 8px 10px; border: 1px solid #b3b7ba; padding: 1px; background: #fff; }
.listbox ul { flex: 1; list-style: none; }
.listbox li { display: flex; align-items: center; height: 12px; gap: 4px; padding-left: 4px; background: #f4effd; }
.listbox .selected { background: #ace2fd; padding-left: 2px; color: #222; }
.scroll { display: flex; flex-direction: column; justify-content: space-between; width: 10px; border-left: 1px solid #dfe2e4; color: #a4a8aa; }
.scroll button { height: 10px; background: #eceeef; }
.flip { transform: rotate(180deg); }
.steps { display: flex; justify-content: center; gap: 3px; }
.steps button { width: 17px; height: 19px; border: 1px solid #b3b7ba; }
.steps button:disabled { background: #eceeef; border-color: #dcdfe1; }
.steps .delete { width: 20px; }

.field { display: flex; align-items: center; margin-bottom: 6px; }
.field input { height: 16px; width: 64px; }
.field button { margin-left: 8px; }
.field:last-child { margin-bottom: 2px; }
.dlg-options { left: 464px; top: 48px; width: 149px; padding-bottom: 8px; }
.dlg-options legend + .field { margin-top: 5px; }
.dlg-options .field label { width: 42px; }
.dlg-options .field input { width: 56px; }

.dlg-marquee { left: 622px; top: 48px; width: 166px; padding-bottom: 11px; }
.dlg-marquee fieldset { padding: 0 5px 4px 4px; margin-bottom: 1px; }
.dlg-marquee textarea { height: 26px; margin-top: 2px; }
.dlg-marquee .field label { width: 22px; }
.dlg-marquee legend + .field { margin-top: 4px; }
.size-row { display: flex; justify-content: space-between; align-items: center; margin: 5px 0; }
.select { display: flex; align-items: center; width: 80px; height: 16px; border: 1px solid #b3b7ba; background: #fafafb; }
.select select { appearance: none; flex: 1; min-width: 0; border: 0; padding: 0 5px; background: none; }
.select svg { width: 10px; height: 14px; padding: 0 1px; border-left: 1px solid #b3b7ba; }
.dlg-marquee > .check { margin: 0 0 3px 1px; }
.reset { width: 34px; height: 16px; margin: 0 auto; border: 1px solid #b3b7ba; }
```
